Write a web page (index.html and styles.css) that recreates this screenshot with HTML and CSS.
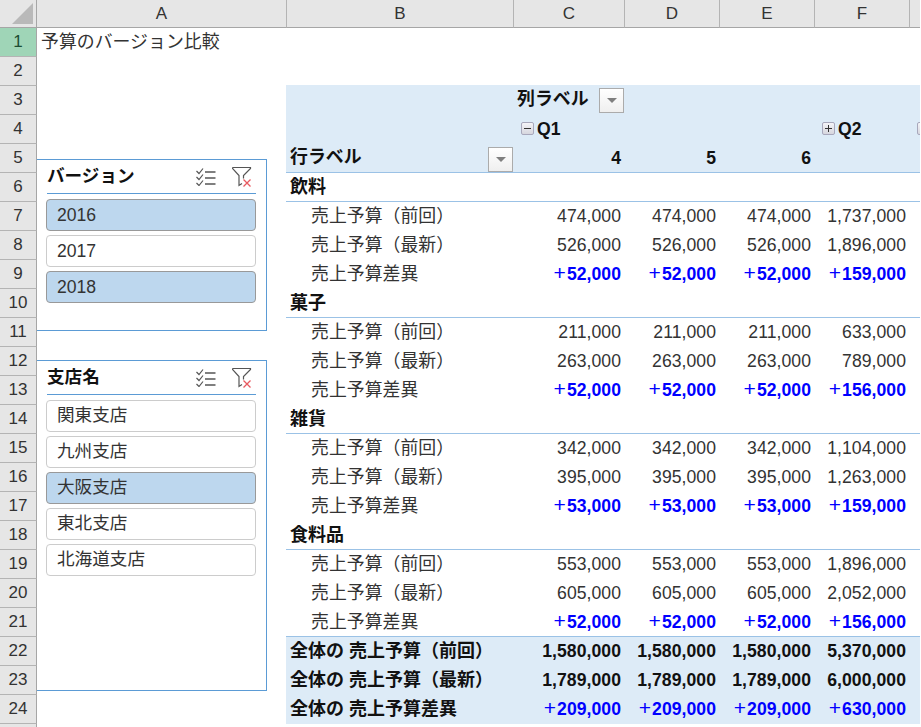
FILE: index.html
```html
<!DOCTYPE html>
<html lang="ja">
<head>
    <meta charset="UTF-8">
    <meta name="viewport" content="width=device-width, initial-scale=1.0">
    <title>予算のバージョン比較</title>
    <link rel="stylesheet" href="styles.css">
</head>
<body>
    <div class="sheet">
        <table class="grid">
            <colgroup>
                <col class="col-head"><col class="col-a"><col class="col-b"><col class="col-c">
                <col class="col-n"><col class="col-n"><col class="col-n"><col class="col-g">
            </colgroup>
            <thead>
                <tr>
                    <th class="corner"><svg width="36" height="27" viewBox="0 0 36 27"><polygon points="33,3 33,24 12,24" fill="#b9b9b9"/></svg></th>
                    <th class="letter">A</th><th class="letter">B</th><th class="letter">C</th>
                    <th class="letter">D</th><th class="letter">E</th><th class="letter">F</th><th class="letter"></th>
                </tr>
            </thead>
            <tbody>
                <tr><th class="num active">1</th><td class="title">予算のバージョン比較</td><td></td><td></td><td></td><td></td><td></td><td></td></tr>
                <tr class="before-pivot"><th class="num">2</th><td></td><td></td><td></td><td></td><td></td><td></td><td></td></tr>
                <tr class="pivot"><th class="num">3</th><td></td><td></td>
                    <td><div class="field"><b>列ラベル</b><span class="drop"></span></div></td><td></td><td></td><td></td><td></td></tr>
                <tr class="pivot"><th class="num">4</th><td></td><td></td>
                    <td><div class="quarter"><span class="toggle"></span><b>Q1</b></div></td><td></td><td></td>
                    <td><div class="quarter"><span class="toggle plus"></span><b>Q2</b></div></td>
                    <td><div class="quarter"><span class="toggle plus"></span></div></td></tr>
                <tr class="pivot last"><th class="num">5</th><td></td>
                    <td><div class="field end"><b>行ラベル</b><span class="drop"></span></div></td>
                    <td class="val"><b>4</b></td><td class="val"><b>5</b></td><td class="val"><b>6</b></td><td></td><td></td></tr>

                <tr class="group"><th class="num">6</th><td></td><td class="label">飲料</td><td></td><td></td><td></td><td></td><td></td></tr>
                <tr><th class="num">7</th><td></td><td class="item">売上予算（前回）</td><td class="val">474,000</td><td class="val">474,000</td><td class="val">474,000</td><td class="val">1,737,000</td><td></td></tr>
                <tr><th class="num">8</th><td></td><td class="item">売上予算（最新）</td><td class="val">526,000</td><td class="val">526,000</td><td class="val">526,000</td><td class="val">1,896,000</td><td></td></tr>
                <tr><th class="num">9</th><td></td><td class="item">売上予算差異</td><td class="val diff"><i>+</i>52,000</td><td class="val diff"><i>+</i>52,000</td><td class="val diff"><i>+</i>52,000</td><td class="val diff"><i>+</i>159,000</td><td></td></tr>

                <tr class="group"><th class="num">10</th><td></td><td class="label">菓子</td><td></td><td></td><td></td><td></td><td></td></tr>
                <tr><th class="num">11</th><td></td><td class="item">売上予算（前回）</td><td class="val">211,000</td><td class="val">211,000</td><td class="val">211,000</td><td class="val">633,000</td><td></td></tr>
                <tr><th class="num">12</th><td></td><td class="item">売上予算（最新）</td><td class="val">263,000</td><td class="val">263,000</td><td class="val">263,000</td><td class="val">789,000</td><td></td></tr>
                <tr><th class="num">13</th><td></td><td class="item">売上予算差異</td><td class="val diff"><i>+</i>52,000</td><td class="val diff"><i>+</i>52,000</td><td class="val diff"><i>+</i>52,000</td><td class="val diff"><i>+</i>156,000</td><td></td></tr>

                <tr class="group"><th class="num">14</th><td></td><td class="label">雑貨</td><td></td><td></td><td></td><td></td><td></td></tr>
                <tr><th class="num">15</th><td></td><td class="item">売上予算（前回）</td><td class="val">342,000</td><td class="val">342,000</td><td class="val">342,000</td><td class="val">1,104,000</td><td></td></tr>
                <tr><th class="num">16</th><td></td><td class="item">売上予算（最新）</td><td class="val">395,000</td><td class="val">395,000</td><td class="val">395,000</td><td class="val">1,263,000</td><td></td></tr>
                <tr><th class="num">17</th><td></td><td class="item">売上予算差異</td><td class="val diff"><i>+</i>53,000</td><td class="val diff"><i>+</i>53,000</td><td class="val diff"><i>+</i>53,000</td><td class="val diff"><i>+</i>159,000</td><td></td></tr>

                <tr class="group"><th class="num">18</th><td></td><td class="label">食料品</td><td></td><td></td><td></td><td></td><td></td></tr>
                <tr><th class="num">19</th><td></td><td class="item">売上予算（前回）</td><td class="val">553,000</td><td class="val">553,000</td><td class="val">553,000</td><td class="val">1,896,000</td><td></td></tr>
                <tr><th class="num">20</th><td></td><td class="item">売上予算（最新）</td><td class="val">605,000</td><td class="val">605,000</td><td class="val">605,000</td><td class="val">2,052,000</td><td></td></tr>
                <tr class="group"><th class="num">21</th><td></td><td class="item">売上予算差異</td><td class="val diff"><i>+</i>52,000</td><td class="val diff"><i>+</i>52,000</td><td class="val diff"><i>+</i>52,000</td><td class="val diff"><i>+</i>156,000</td><td></td></tr>

                <tr class="total"><th class="num">22</th><td></td><td class="label">全体の 売上予算（前回）</td><td class="val">1,580,000</td><td class="val">1,580,000</td><td class="val">1,580,000</td><td class="val">5,370,000</td><td></td></tr>
                <tr class="total"><th class="num">23</th><td></td><td class="label">全体の 売上予算（最新）</td><td class="val">1,789,000</td><td class="val">1,789,000</td><td class="val">1,789,000</td><td class="val">6,000,000</td><td></td></tr>
                <tr class="total"><th class="num">24</th><td></td><td class="label">全体の 売上予算差異</td><td class="val diff"><i>+</i>209,000</td><td class="val diff"><i>+</i>209,000</td><td class="val diff"><i>+</i>209,000</td><td class="val diff"><i>+</i>630,000</td><td></td></tr>
                <tr><th class="num"></th><td></td><td></td><td></td><td></td><td></td><td></td><td></td></tr>
            </tbody>
        </table>

        <section class="slicer version">
            <header class="slicer-head">
                <span class="slicer-title">バージョン</span>
                <svg class="icon-multi" width="20" height="18" viewBox="0 0 20 18" fill="none" stroke="#555" stroke-width="1.2">
                    <path d="M0.5 3l2.5 2.5 4-5M0.5 9l2.5 2.5 4-5M0.5 15l2.5 2.5 4-5"/>
                    <path d="M9 4h10.500M9 10h10.500M9 16h10.500" stroke-width="1.500"/>
                </svg>
                <svg class="icon-clear" width="20" height="20" viewBox="0 0 20 20" fill="none">
                    <path d="M0.500 0.500h18v1l-7 7v3M0.500 0.500v1l6.500 7v10l3-2" stroke="#555" stroke-width="1.200"/>
                    <path d="M11.500 12.500l7 7M18.500 12.500l-7 7" stroke="#e8595f" stroke-width="1.300"/>
                </svg>
            </header>
            <ul class="slicer-items">
                <li class="on">2016</li>
                <li>2017</li>
                <li class="on">2018</li>
            </ul>
        </section>

        <section class="slicer branch">
            <header class="slicer-head">
                <span class="slicer-title">支店名</span>
                <svg class="icon-multi" width="20" height="18" viewBox="0 0 20 18" fill="none" stroke="#555" stroke-width="1.2">
                    <path d="M0.5 3l2.5 2.5 4-5M0.5 9l2.5 2.5 4-5M0.5 15l2.5 2.5 4-5"/>
                    <path d="M9 4h10.500M9 10h10.500M9 16h10.500" stroke-width="1.500"/>
                </svg>
                <svg class="icon-clear" width="20" height="20" viewBox="0 0 20 20" fill="none">
                    <path d="M0.500 0.500h18v1l-7 7v3M0.500 0.500v1l6.500 7v10l3-2" stroke="#555" stroke-width="1.200"/>
                    <path d="M11.500 12.500l7 7M18.500 12.500l-7 7" stroke="#e8595f" stroke-width="1.300"/>
                </svg>
            </header>
            <ul class="slicer-items">
                <li>関東支店</li>
                <li>九州支店</li>
                <li class="on">大阪支店</li>
                <li>東北支店</li>
                <li>北海道支店</li>
            </ul>
        </section>
    </div>
</body>
</html>
```

FILE: styles.css
```css
html, body {
    margin: 0;
    height: 100%;
    overflow: hidden;
    background-color: #FFFFFF;
}
body {
    font-family: 'Liberation Sans', 'Noto Sans CJK JP', sans-serif;
    font-size: 17.6px;
    color: #222;
}
.sheet {
    position: relative;
    width: 921px;
    height: 727px;
    overflow: hidden;
}

/* grid */
.grid {
    table-layout: fixed;
    border-collapse: separate;
    border-spacing: 0;
    width: 920px;
}
.col-head { width: 37px; }
.col-a { width: 249px; }
.col-b { width: 227px; }
.col-c { width: 111px; }
.col-n { width: 95px; }
.col-g { width: 11px; }
.grid th, .grid td {
    box-sizing: border-box;
    height: 29px;
    padding: 0;
    line-height: 20px;
    overflow: hidden;
    white-space: nowrap;
    border-bottom: 1px solid transparent;
}
.grid b { font-weight: 700; }

/* headers */
.grid thead th {
    height: 28px;
    background-color: #E6E6E6;
    border-bottom: 1px solid #A6A6A6;
    font-weight: 400;
    font-size: 17px;
    color: #333;
}
.grid thead .letter {
    border-left: 1px solid #B4B4B4;
}
.grid thead .letter:nth-child(2) {
    border-left: none;
}
.corner {
    border-right: 1px solid #A6A6A6;
    vertical-align: top;
}
.corner svg { display: block; }
.grid .num {
    background-color: #E6E6E6;
    border-right: 1px solid #A6A6A6;
    border-bottom: 1px solid #B4B4B4;
    font-weight: 400;
    font-size: 17px;
    color: #333;
}
.grid .num.active {
    background-color: #9FD5B7;
    color: #1d4d33;
}

/* pivot */
.before-pivot td:nth-child(n+3) {
    border-bottom-color: #DDEBF7;
}
.pivot td:nth-child(n+3), .total td:nth-child(n+3) {
    background-color: #DDEBF7;
}
.pivot td:nth-child(n+3) {
    border-bottom-color: #DDEBF7;
}
.total td:nth-child(n+3) {
    border-bottom-color: #DDEBF7;
}
.pivot.last td:nth-child(n+3), .group td:nth-child(n+3) {
    border-bottom-color: #9BC2E6;
}
.grid .title {
    padding: 0 0 1px 4px;
    font-size: 17.9px;
    color: #333;
}
.grid .label {
    padding: 0 0 1px 4px;
    font-size: 18px;
    font-weight: 700;
    color: #111;
}
.grid .item {
    padding: 0 0 0 25px;
    font-size: 17.9px;
    color: #333;
}
.grid .val {
    padding: 0 3px 1px 0;
    text-align: right;
    color: #333;
    letter-spacing: 0.05px;
}
.pivot .val, .total .val {
    color: #111;
}
.total .val { font-weight: 700; }
.grid .diff {
    color: #0000FF;
    font-weight: 700;
}
.diff i {
    font-style: normal;
    font-weight: 400;
    font-size: 21px;
    line-height: 16px;
    margin-right: 1px;
}
.field {
    display: flex;
    align-items: center;
    justify-content: space-between;
    height: 28px;
    padding-left: 4px;
    color: #111;
    font-size: 17.9px;
}
.field b { position: relative; top: -1px; }
.field.end {
    align-items: flex-end;
}
.field.end b { align-self: center; }
.drop {
    box-sizing: border-box;
    display: flex;
    align-items: center;
    justify-content: center;
    flex: none;
    width: 25px;
    height: 25px;
    border: 1px solid #ABABAB;
    background: linear-gradient(to bottom, #FFFFFF, #EFEFEF);
}
.drop::before {
    content: "";
    border-left: 5px solid transparent;
    border-right: 5px solid transparent;
    border-top: 5px solid #7F7F7F;
}
.quarter {
    display: flex;
    align-items: center;
    gap: 3px;
    padding: 0 0 1px 8px;
    color: #111;
}
.toggle {
    box-sizing: border-box;
    position: relative;
    flex: none;
    width: 13px;
    height: 13px;
    border: 1px solid #A8A8BC;
    border-radius: 2px;
    background: linear-gradient(to bottom, #F4F4F8, #D6D6DE);
}
.toggle::before {
    content: "";
    position: absolute;
    left: 2px;
    right: 2px;
    top: 5px;
    height: 1px;
    background-color: #333;
}
.toggle.plus::after {
    content: "";
    position: absolute;
    top: 2px;
    bottom: 2px;
    left: 5px;
    width: 1px;
    background-color: #333;
}

/* slicers */
.slicer {
    box-sizing: border-box;
    position: absolute;
    left: 37px;
    width: 230px;
    background-color: #FFFFFF;
    border: 1px solid #5B9BD5;
    border-left: none;
    padding: 0 10px 0 9px;
}
.version { top: 159px; height: 172px; }
.branch { top: 360px; height: 331px; }
.slicer-head {
    box-sizing: border-box;
    display: flex;
    align-items: center;
    height: 34px;
    margin-left: 1px;
    padding: 0 4px 0 0;
    border-bottom: 1px solid #5B9BD5;
}
.slicer-title {
    flex: 1;
    font-weight: 700;
    line-height: 20px;
    padding-bottom: 1px;
    color: #111;
}
.icon-multi { margin-top: 1px; }
.icon-clear { margin-left: 16px; margin-top: 1px; }
.slicer-items {
    display: flex;
    flex-direction: column;
    gap: 4px;
    list-style: none;
    margin: 5px 0 0;
    padding: 0;
}
.slicer-items li {
    box-sizing: border-box;
    height: 32px;
    line-height: 30px;
    padding-left: 10px;
    border: 1px solid #CCCCCC;
    border-radius: 4px;
    color: #333;
}
.slicer-items li.on {
    background-color: #BDD7EE;
    border-color: #999999;
}
.branch li { line-height: 29px; }
```
